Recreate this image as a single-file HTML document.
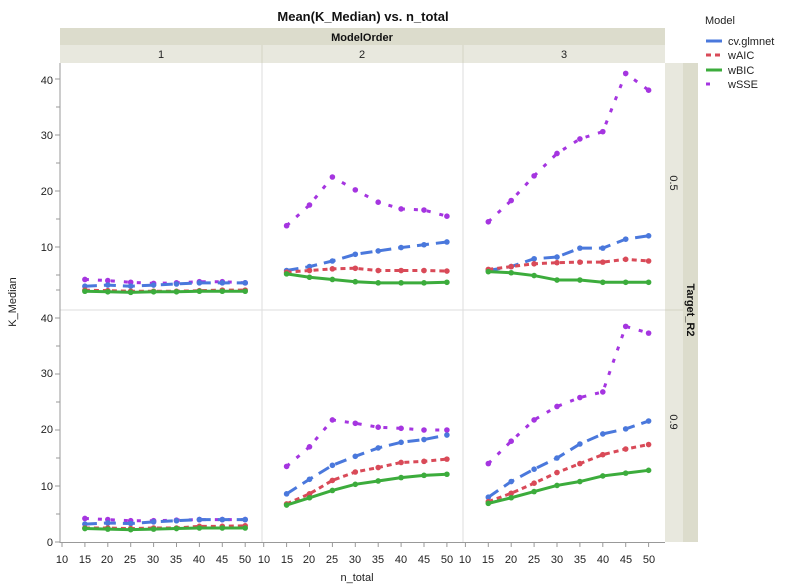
<!DOCTYPE html>
<html><head><meta charset="utf-8"><style>
body{margin:0;background:#fff;}
svg{display:block;font-family:"Liberation Sans","DejaVu Sans",sans-serif;}
</style></head><body>
<svg id="s" width="797" height="586" viewBox="0 0 797 586">
<rect width="797" height="586" fill="#fff"/>
<text x="363" y="21" font-size="13" font-weight="bold" text-anchor="middle" fill="#111">Mean(K_Median) vs. n_total</text>
<!-- headers -->
<rect x="60" y="28" width="605" height="17" fill="#dcdccc"/>
<text x="362" y="41" font-size="11" font-weight="bold" text-anchor="middle" fill="#111">ModelOrder</text>
<rect x="60" y="45" width="605" height="18" fill="#e8e8de"/>
<line x1="262" y1="45" x2="262" y2="63" stroke="#d4d4c4"/>
<line x1="463" y1="45" x2="463" y2="63" stroke="#d4d4c4"/>
<text x="161" y="58" font-size="11" text-anchor="middle" fill="#222">1</text>
<text x="362" y="58" font-size="11" text-anchor="middle" fill="#222">2</text>
<text x="564" y="58" font-size="11" text-anchor="middle" fill="#222">3</text>
<rect x="665" y="63" width="18" height="479" fill="#e8e8de"/>
<rect x="683" y="63" width="15" height="479" fill="#dcdccc"/>
<line x1="665" y1="310" x2="683" y2="310" stroke="#d4d4c4"/>
<text transform="translate(670,183) rotate(90)" font-size="11" text-anchor="middle" fill="#222">0.5</text>
<text transform="translate(670,422) rotate(90)" font-size="11" text-anchor="middle" fill="#222">0.9</text>
<text transform="translate(687,310) rotate(90)" font-size="11" font-weight="bold" text-anchor="middle" fill="#111">Target_R2</text>
<!-- grid separators -->
<line x1="262" y1="63" x2="262" y2="542" stroke="#ddd"/>
<line x1="463" y1="63" x2="463" y2="542" stroke="#ddd"/>
<line x1="60" y1="310" x2="665" y2="310" stroke="#ddd"/>
<!-- axes -->
<line x1="60" y1="63" x2="60" y2="543" stroke="#999"/>
<line x1="60" y1="542.5" x2="665" y2="542.5" stroke="#999"/>
<g id="ticks" stroke="#999"></g>
<g font-size="11" fill="#222" text-anchor="end">
<text x="53" y="84">40</text><text x="53" y="139">30</text><text x="53" y="195">20</text><text x="53" y="251">10</text>
<text x="53" y="322">40</text><text x="53" y="377">30</text><text x="53" y="433">20</text><text x="53" y="490">10</text><text x="53" y="546">0</text>
</g>
<g font-size="11" fill="#222" text-anchor="middle">
<text x="62" y="563">10</text><text x="85" y="563">15</text><text x="107" y="563">20</text><text x="130" y="563">25</text><text x="153" y="563">30</text><text x="176" y="563">35</text><text x="199" y="563">40</text><text x="222" y="563">45</text><text x="245" y="563">50</text>
<text x="264" y="563">10</text><text x="287" y="563">15</text><text x="309" y="563">20</text><text x="332" y="563">25</text><text x="355" y="563">30</text><text x="378" y="563">35</text><text x="401" y="563">40</text><text x="424" y="563">45</text><text x="447" y="563">50</text>
<text x="465" y="563">10</text><text x="488" y="563">15</text><text x="511" y="563">20</text><text x="534" y="563">25</text><text x="557" y="563">30</text><text x="580" y="563">35</text><text x="603" y="563">40</text><text x="626" y="563">45</text><text x="649" y="563">50</text>
</g>
<text x="357" y="581" font-size="11" text-anchor="middle" fill="#222">n_total</text>
<text transform="translate(16,302) rotate(-90)" font-size="11" text-anchor="middle" fill="#222">K_Median</text>
<!-- legend -->
<text x="705" y="24" font-size="11" fill="#222">Model</text>
<line x1="706" y1="41" x2="722" y2="41" stroke="#4a78dc" stroke-width="3"/>
<line x1="706" y1="55" x2="722" y2="55" stroke="#d94a58" stroke-width="3" stroke-dasharray="5,4"/>
<line x1="706" y1="70" x2="722" y2="70" stroke="#3cac3c" stroke-width="3"/>
<line x1="706" y1="84" x2="710" y2="84" stroke="#a535e0" stroke-width="3"/>
<g font-size="11" fill="#222"><text x="728" y="45">cv.glmnet</text><text x="728" y="59">wAIC</text><text x="728" y="74">wBIC</text><text x="728" y="88">wSSE</text></g>
<g id="data"></g>
</svg>
<script>
var NS="http://www.w3.org/2000/svg";
var t=document.getElementById("ticks");
function L(g,x1,y1,x2,y2){var l=document.createElementNS(NS,"line");l.setAttribute("x1",x1);l.setAttribute("y1",y1);l.setAttribute("x2",x2);l.setAttribute("y2",y2);g.appendChild(l);}
[303,542].forEach(function(b){for(var v=0;v<=45;v+=5){var y=b-v*5.6;if(b==303&&v==0)continue;if(y<64)continue;L(t,v%10?56:55,y,60,y);}});
for(var p=0;p<3;p++){for(var v=10;v<=50;v+=5){var x=60+p*201.7+2+(v-10)*4.58;L(t,x,542,x,547);}}
var C={cv:["#4a78dc","12,7"],aic:["#d94a58","5,4"],bic:["#3cac3c",""],sse:["#a535e0","4,9"]};
var D=[
[0,0,{sse:[4.2,4,3.7,3.5,3.6,3.8,3.8,3.6],cv:[3,3.2,3,3.2,3.4,3.6,3.6,3.6],aic:[2.3,2.2,2.1,2.1,2.1,2.2,2.3,2.3],bic:[2.1,2,1.9,2,2,2.1,2.1,2.1]}],
[1,0,{sse:[13.8,17.5,22.5,20.2,18,16.8,16.6,15.5],cv:[5.8,6.5,7.5,8.7,9.3,9.9,10.4,10.9],aic:[5.5,5.8,6.1,6.2,5.8,5.8,5.8,5.7],bic:[5.2,4.6,4.2,3.8,3.6,3.6,3.6,3.7]}],
[2,0,{sse:[14.5,18.3,22.7,26.7,29.3,30.6,41,38],cv:[5.8,6.5,7.9,8.2,9.8,9.8,11.4,12],aic:[6,6.5,7,7.2,7.3,7.3,7.8,7.5],bic:[5.6,5.4,4.9,4.1,4.1,3.7,3.7,3.7]}],
[0,1,{sse:[4.2,4,3.8,3.8,3.9,4,4,4],cv:[3.2,3.4,3.3,3.6,3.8,4,4,4],aic:[2.5,2.5,2.4,2.5,2.5,2.8,2.8,2.9],bic:[2.4,2.3,2.2,2.3,2.4,2.5,2.5,2.5]}],
[1,1,{sse:[13.5,17,21.8,21.2,20.5,20.3,20,20],cv:[8.6,11.2,13.7,15.3,16.8,17.8,18.3,19.1],aic:[6.8,8.6,11,12.5,13.3,14.2,14.4,14.8],bic:[6.6,7.9,9.2,10.3,10.9,11.5,11.9,12.1]}],
[2,1,{sse:[14,18,21.8,24.2,25.8,26.8,38.5,37.3],cv:[8,10.8,13,15,17.5,19.3,20.2,21.6],aic:[7.2,8.7,10.5,12.4,14,15.6,16.6,17.4],bic:[6.9,7.9,9,10.1,10.8,11.8,12.3,12.8]}]];
var g=document.getElementById("data");
D.forEach(function(d){var p=d[0],b=d[1]?542:303;["sse","cv","aic","bic"].forEach(function(k){var pts=d[2][k].map(function(v,i){return [60+p*201.7+2+(5+5*i)*4.58,b-v*5.6];});
var pl=document.createElementNS(NS,"polyline");pl.setAttribute("points",pts.map(function(q){return q.join(",")}).join(" "));pl.setAttribute("fill","none");pl.setAttribute("stroke",C[k][0]);pl.setAttribute("stroke-width","3");if(C[k][1])pl.setAttribute("stroke-dasharray",C[k][1]);g.appendChild(pl);
pts.forEach(function(q){var c=document.createElementNS(NS,"circle");c.setAttribute("cx",q[0]);c.setAttribute("cy",q[1]);c.setAttribute("r","2.8");c.setAttribute("fill",C[k][0]);g.appendChild(c);});});});
</script>
</body></html>
